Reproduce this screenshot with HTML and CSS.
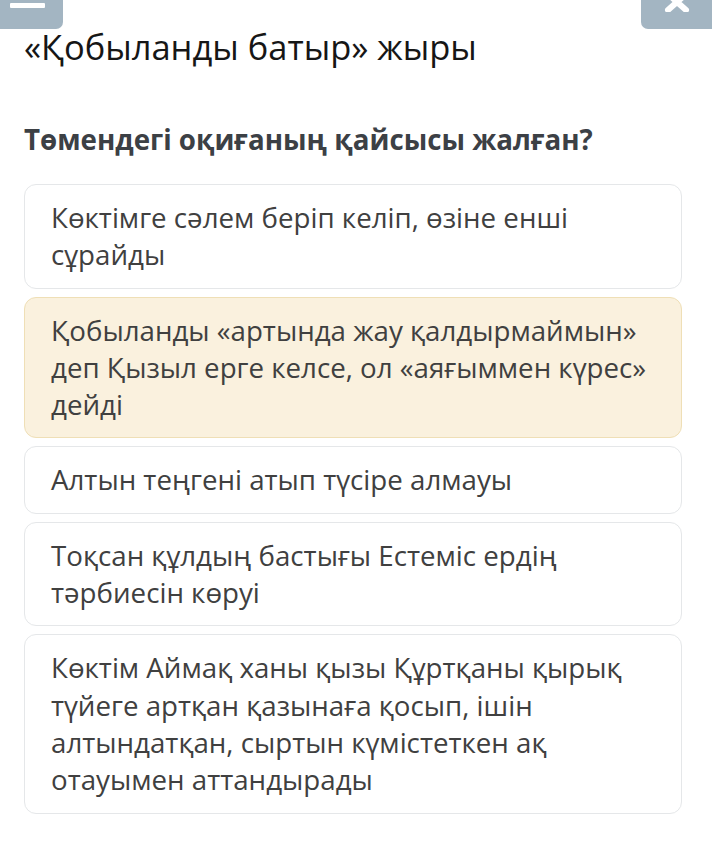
FILE: index.html
```html
<!DOCTYPE html>
<html lang="kk">
<head>
<meta charset="utf-8">
<link rel="stylesheet" href="styles.css">
</head>
<body>
<div class="topbar">
  <div class="btn btn-left"><span class="bar"></span></div>
  <div class="btn btn-right">
    <svg class="x" width="30" height="12" viewBox="0 0 30 12"><path d="M6 -6 L24 10 M24 -6 L6 10" stroke="#fff" stroke-width="6" stroke-linecap="round"/></svg>
  </div>
</div>
<main class="content">
  <h1 class="title">«Қобыланды батыр» жыры</h1>
  <h2 class="question">Төмендегі оқиғаның қайсысы жалған?</h2>
  <div class="options">
    <div class="option">Көктімге сәлем беріп келіп, өзіне енші сұрайды</div>
    <div class="option selected">Қобыланды «артында жау қалдырмаймын» деп Қызыл ерге келсе, ол «аяғыммен күрес» дейді</div>
    <div class="option">Алтын теңгені атып түсіре алмауы</div>
    <div class="option">Тоқсан құлдың бастығы Естеміс ердің тәрбиесін көруі</div>
    <div class="option">Көктім Аймақ ханы қызы Құртқаны қырық түйеге артқан қазынаға қосып, ішін алтындатқан, сыртын күмістеткен ақ отауымен аттандырады</div>
  </div>
</main>
</body>
</html>
```
FILE: styles.css
```css
html, body {
  margin: 0;
  padding: 0;
  background: #ffffff;
}
body {
  font-family: "Open Sans", "Noto Sans", sans-serif;
  color: #3b3b3b;
  width: 712px;
  height: 841px;
  overflow: hidden;
}
.topbar {
  display: flex;
  justify-content: space-between;
  height: 29px;
}
.btn {
  background: #a3b5c2;
  height: 29px;
  position: relative;
  overflow: hidden;
}
.btn-left {
  width: 63px;
  border-bottom-right-radius: 7px;
}
.btn-left .bar {
  position: absolute;
  left: 10px;
  top: 3px;
  width: 35px;
  height: 5px;
  background: #fff;
  border-radius: 1px;
}
.btn-right {
  width: 71px;
  border-bottom-left-radius: 7px;
}
.btn-right .x {
  position: absolute;
  left: 21px;
  top: 0;
}
.content {
  padding: 0 30px 0 24px;
}
.title {
  margin: 0;
  font-weight: 400;
  font-size: 34.5px;
  line-height: 36px;
  color: #161616;
}
.question {
  margin: 56px 0 0;
  font-weight: 700;
  font-size: 27.7px;
  line-height: 36px;
  color: #3c4045;
}
.options {
  margin-top: 27px;
  display: flex;
  flex-direction: column;
  gap: 8px;
}
.option {
  border: 1px solid #e5e7e9;
  border-radius: 12px;
  padding: 14px 26px;
  font-size: 27.7px;
  line-height: 37.3px;
  color: #404040;
  background: #fff;
}
.option.selected {
  background: #faf1de;
  border-color: #efdfb6;
}
```
